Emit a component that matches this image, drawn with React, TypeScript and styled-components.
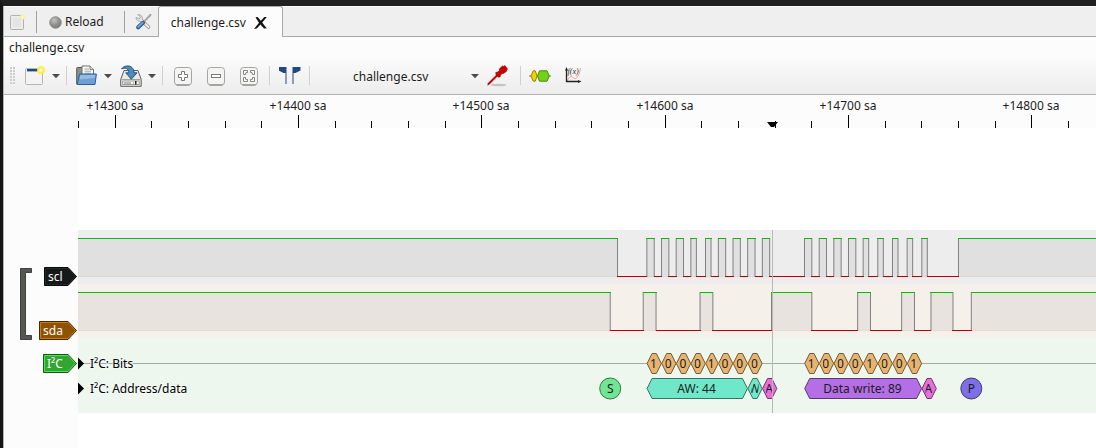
import React, { useSyncExternalStore } from "react";
import styled, { createGlobalStyle, css } from "styled-components";

const FONT = '"Noto Sans", "Open Sans", sans-serif';

const GlobalStyle = createGlobalStyle`
  *, *::before, *::after { box-sizing: border-box; }
  body {
    margin: 0;
    background: #fff;
    color: #1c1c1c;
    font: 12px/16px ${FONT};
  }
`;

/* ---------- window chrome ---------- */

const Window = styled.div`
  display: flex;
  flex-direction: column;
  min-height: 100vh;
  border-top: 6px solid #202020;
  border-left: 3px solid #151515;
  overflow: hidden;
`;

const Inner = styled.div`
  display: flex;
  flex-direction: column;
  flex: 1;
  border-left: 1px solid #b4b4b4;
`;

const resetButton = css`
  display: inline-flex;
  align-items: center;
  justify-content: center;
  padding: 0;
  border: 0;
  background: none;
  color: inherit;
  font: inherit;
`;

const TabBar = styled.header`
  display: flex;
  align-items: center;
  height: 31px;
  background: #efefef;
  box-shadow: inset 0 1px #fafafa, inset 0 -1px #a9a9a9;
`;

const BarButton = styled.button<{ $pad: number }>`
  ${resetButton}
  gap: 3px;
  height: 31px;
  padding: 1px ${(p) => p.$pad}px 0;
`;

const BarDivider = styled.span`
  width: 1px;
  height: 22px;
  background: #a2a2a2;
`;

const Tab = styled.div`
  display: flex;
  align-items: center;
  gap: 8px;
  height: 31px;
  padding: 1px 15px 0 12px;
  border: 1px solid #a9a9a9;
  border-bottom: 0;
  border-radius: 3px 3px 0 0;
  background: #fcfcfc;
`;

const CloseButton = styled.button`
  ${resetButton}
`;

const Caption = styled.div`
  height: 20px;
  padding: 3px 5px 0;
  background: #fcfcfc;
`;

const Spacer = styled.span<{ $width: number }>`
  flex: none;
  width: ${(p) => p.$width}px;
`;

/* ---------- tool bar ---------- */

const Toolbar = styled.div`
  display: flex;
  align-items: center;
  height: 38px;
  padding-left: 6px;
  border-bottom: 1px solid #b2b2b2;
  background: linear-gradient(#fbfbfb, #ededed);
`;

const Grip = styled.span`
  width: 5px;
  height: 17px;
  background-image: radial-gradient(circle at 1px 1px, #cdcdcd 1px, transparent 1px);
  background-size: 3px 3px;
`;

const Group = styled.div<{ $gap?: number; $start?: number; $end?: number }>`
  display: flex;
  align-items: center;
  gap: ${(p) => p.$gap ?? 11}px;
  padding: 0 ${(p) => p.$end ?? 9}px 0 ${(p) => p.$start ?? 9}px;
`;

const Split = styled.div`
  display: flex;
  align-items: center;
  gap: 5px;
`;

const ToolButton = styled.button`
  ${resetButton}
  width: 22px;
  height: 26px;
`;

const DropButton = styled.button`
  ${resetButton}
  width: 10px;
  height: 26px;
`;

const Divider = styled.span`
  width: 1px;
  height: 19px;
  background: #cfcfcf;
`;

const DeviceField = styled.div`
  display: grid;
  align-items: center;
  width: 175px;
`;

const DeviceSelect = styled.select`
  grid-area: 1 / 1;
  appearance: none;
  width: 100%;
  height: 24px;
  padding: 2px 20px 0 43px;
  border: 0;
  background: none;
  color: inherit;
  font: inherit;
`;

const SelectArrow = styled.span`
  grid-area: 1 / 1;
  display: flex;
  justify-self: end;
  padding-right: 5px;
  pointer-events: none;
`;

/* ---------- trace view ---------- */

const View = styled.main`
  display: flex;
  flex: 1;
`;

const Margin = styled.aside`
  display: flex;
  flex-direction: column;
  align-items: flex-end;
  gap: 13px;
  flex: none;
  width: 74px;
  padding-top: 172px;
  background: #fcfcfc;
`;

const ChannelGroup = styled.div`
  display: flex;
  justify-content: space-between;
  align-self: stretch;
  padding-left: 16px;
`;

const ChannelTags = styled.div`
  display: flex;
  flex-direction: column;
  justify-content: space-between;
  align-items: flex-end;
  height: 74px;
`;

const Canvas = styled.div`
  display: flex;
  flex-direction: column;
  flex: 1;
  min-width: 0;
`;

const Ruler = styled.svg`
  display: block;
  width: 100%;
  height: 33px;
  background: #fcfcfc;
`;

const Traces = styled.svg`
  display: block;
  width: 100%;
  height: 183px;
  margin-top: 102px;
`;

const Label = styled.text`
  font: 12px ${FONT};
  fill: #1c1c1c;
`;

const HaloLabel = styled(Label)`
  fill: #000;
  stroke: #f6fbf7;
  stroke-width: 2px;
  stroke-opacity: 0.8;
  paint-order: stroke;
`;

const TagText = styled.text`
  font: 12px ${FONT};
  fill: #fff;
`;

/* ---------- time scale ---------- */

const FIRST = 14300;
const SCALE = 1.833;
const EXTENT = 4000;
const MARGIN_WIDTH = 78;
const px = (sample: number) => 37.3 + (sample - FIRST) * SCALE;

const subscribeResize = (notify: () => void) => {
  window.addEventListener("resize", notify);
  return () => window.removeEventListener("resize", notify);
};
const useCanvasWidth = () => useSyncExternalStore(subscribeResize, () => window.innerWidth - MARGIN_WIDTH);

/* ---------- data ---------- */

const SCL = [
  14574, 14590, 14594, 14598, 14602, 14606, 14610, 14614, 14617, 14622, 14625, 14629, 14633, 14637, 14641,
  14645, 14649, 14653, 14657, 14676, 14680, 14684, 14688, 14692, 14696, 14700, 14704, 14708, 14711, 14716,
  14719, 14724, 14727, 14732, 14735, 14740, 14743, 14760,
];
const SDA = [
  14570, 14588, 14595, 14619, 14626, 14658, 14680, 14705, 14712, 14729, 14736, 14745, 14757, 14767,
];

type Note = { from: number; to: number; text: string; fill: string; line: string };

const bitNotes = (edges: number[], bits: string): Note[] =>
  bits.split("").map((text, i) => ({ from: edges[i], to: edges[i + 1], text, fill: "#e7b36f", line: "#735937" }));

const BITS: Note[] = [
  ...bitNotes([14590, 14598, 14606, 14614, 14622, 14629, 14637, 14645, 14653], "10001000"),
  ...bitNotes([14676, 14684, 14692, 14700, 14708, 14716, 14724, 14732, 14740], "10001001"),
];

const BYTES: Note[] = [
  { from: 14590, to: 14645, text: "AW: 44", fill: "#6fe7c9", line: "#377364" },
  { from: 14645, to: 14653, text: "W", fill: "#6fe7c9", line: "#377364" },
  { from: 14653, to: 14661, text: "A", fill: "#e76fda", line: "#73376d" },
  { from: 14676, to: 14740, text: "Data write: 89", fill: "#b46fe7", line: "#593773" },
  { from: 14740, to: 14748, text: "A", fill: "#e76fda", line: "#73376d" },
];

/* ---------- trace drawing ---------- */

function Signal({ edges, top }: { edges: number[]; top: number }) {
  const high = top + 0.5;
  const low = top + 38.5;
  const points = [0, ...edges.map(px), EXTENT];
  const spans = points.slice(1).map((end, i) => ({ start: points[i], end, up: i % 2 === 0 }));
  return (
    <g>
      {spans.filter((s) => s.up).map((s) => (
        <g key={s.start}>
          <rect x={s.start} y={high} width={s.end - s.start} height={38} fill="#000" fillOpacity={0.05} />
          <path d={`M${s.start} ${low}H${s.end}`} stroke="#000" strokeOpacity={0.06} />
        </g>
      ))}
      {edges.map((e) => (
        <path key={e} d={`M${px(e)} ${top}V${low + 0.5}`} stroke="#808080" />
      ))}
      {spans.map((s) => (
        <path
          key={s.start}
          d={`M${s.start - 0.5} ${s.up ? high : low}H${s.end + 0.5}`}
          stroke={s.up ? "#00c000" : "#c00000"}
          shapeRendering="crispEdges"
        />
      ))}
    </g>
  );
}

function Annotation({ note, mid, id }: { note: Note; mid: number; id: string }) {
  const a = px(note.from) + 0.2;
  const b = px(note.to) - 0.2;
  const shape = `${a},${mid} ${a + 5},${mid - 10} ${b - 5},${mid - 10} ${b},${mid} ${b - 5},${mid + 10} ${a + 5},${mid + 10}`;
  return (
    <g>
      <clipPath id={id}>
        <rect x={a + 3.5} y={mid - 10} width={b - a - 7} height={20} />
      </clipPath>
      <polygon points={shape} fill={note.fill} stroke={note.line} />
      <Label x={(a + b) / 2 - 0.7} y={mid + 4.5} textAnchor="middle" clipPath={`url(#${id})`}>
        {note.text}
      </Label>
    </g>
  );
}

function Event({ at, text, fill, line }: { at: number; text: string; fill: string; line: string }) {
  return (
    <g>
      <circle cx={px(at)} cy={158.5} r={10.5} fill={fill} stroke={line} />
      <Label x={px(at)} y={163} textAnchor="middle">{text}</Label>
    </g>
  );
}

function TimeRuler() {
  const width = useCanvasWidth();
  const count = Math.ceil(width / (20 * SCALE));
  const ticks = Array.from({ length: count }, (_, i) => FIRST - 20 + i * 20);
  return (
    <Ruler role="img" aria-label="Sample ruler">
      {ticks.map((t) => {
        const x = Math.floor(px(t));
        const major = t % 100 === 0;
        return (
          <g key={t}>
            <rect x={x} y={major ? 20 : 26} width={1} height={major ? 13 : 7} fill="#000" />
            {major && x + 30 < width && <Label x={x} y={15} textAnchor="middle">{`+${t} sa`}</Label>}
          </g>
        );
      })}
      <path d="M689 27H700L696 32H693Z" fill="#000" />
    </Ruler>
  );
}

function TraceArea() {
  return (
    <Traces role="img" aria-label="scl, sda and I²C traces">
      <rect width="100%" height={54} fill="#ededed" />
      <rect y={54} width="100%" height={54} fill="#f5f0ea" />
      <rect y={108} width="100%" height={75} fill="#edf7ee" />
      <Signal edges={SCL} top={8} />
      <Signal edges={SDA} top={62} />
      <path d={`M0 133.5H${EXTENT}`} stroke="#a3aaa4" />
      <path d="M0 127.5L6 133.5L0 139.5ZM0 152.5L6 158.5L0 164.5Z" fill="#000" />
      <HaloLabel x={12} y={138}>I²C: Bits</HaloLabel>
      <HaloLabel x={12} y={163}>I²C: Address/data</HaloLabel>
      {BITS.map((n) => <Annotation key={n.from} note={n} mid={133.5} id={`bit${n.from}`} />)}
      {BYTES.map((n) => <Annotation key={n.from} note={n} mid={158.5} id={`byte${n.from}`} />)}
      <Event at={14570} text="S" fill="#6fe792" line="#377349" />
      <Event at={14767} text="P" fill="#7f6fe7" line="#3f3773" />
      <path d="M694.5 0V183" stroke="#b9b9b9" />
    </Traces>
  );
}

function Tag({ width, text, fill, light, dark }: { width: number; text: string; fill: string; light: string; dark: string }) {
  const shape = (i: number) =>
    `${i},${i} ${width - 9},${i} ${width - i},9.5 ${width - 9},${19 - i} ${i},${19 - i}`;
  return (
    <svg width={width + 1} height={20} role="img" aria-label={text}>
      <polygon points={shape(0.5)} fill={dark} stroke={dark} />
      <polygon points={shape(1.5)} fill={fill} stroke={light} />
      <TagText x={4} y={14}>{text}</TagText>
    </svg>
  );
}

/* ---------- icons ---------- */

const Arrow = () => (
  <svg width="10" height="6" viewBox="0 0 10 6"><path d="M1 1H9L5 5.2Z" fill="#4c4c4c" /></svg>
);

const NewSessionIcon = () => (
  <svg width="22" height="22" viewBox="0 0 22 22">
    <rect x="1.5" y="3.5" width="17" height="16" rx="1" fill="#f3f3f3" stroke="#b5b5b5" />
    <rect x="3" y="4" width="11" height="2.4" fill="#204a87" />
    <circle cx="17" cy="5" r="4" fill="#fcee3c" fillOpacity=".9" />
    <circle cx="17" cy="5" r="1.8" fill="#fffcc0" />
  </svg>
);

const NewTabIcon = () => (
  <svg width="16" height="16" viewBox="0 0 16 16">
    <rect x="0.5" y="1.5" width="13" height="14" rx="1" fill="#ececec" stroke="#b3b0aa" />
    <rect x="3" y="4" width="8" height="9" fill="#e4e4e4" />
    <circle cx="12.5" cy="3" r="2.6" fill="#f7efa0" />
    <circle cx="12.5" cy="3" r="1" fill="#fffce0" />
  </svg>
);

const BallIcon = () => (
  <svg width="13" height="13" viewBox="0 0 13 13">
    <defs>
      <radialGradient id="ball" cx=".38" cy=".3" r=".8">
        <stop offset="0" stopColor="#c3c4bf" />
        <stop offset=".5" stopColor="#92948f" />
        <stop offset="1" stopColor="#747672" />
      </radialGradient>
    </defs>
    <circle cx="6.5" cy="6.5" r="5.8" fill="url(#ball)" stroke="#838580" strokeWidth=".8" />
  </svg>
);

const ToolsIcon = () => (
  <svg width="17" height="16" viewBox="0 0 17 16" fill="none" strokeLinecap="round">
    <path d="M5.500 5.500L13.500 13" stroke="#8f918d" strokeWidth="3.600" />
    <path d="M3.200 .8L5.400 2.800L4.800 4.400L3 4.800L1.200 3.200C.8 6 2.800 7.600 5.200 6.800L7.400 4.800C7.600 2.200 5.600 .2 3.200 .8Z" fill="#e8e8e6" stroke="#999b97" strokeWidth=".8" />
    <path d="M5.500 5.500L13.500 13" stroke="#ecece9" strokeWidth="2" />
    <path d="M15.400 1L8.800 7.800" stroke="#8a8c88" strokeWidth="1.800" />
    <path d="M15.200 1.200L9.200 7.400" stroke="#dcdcda" strokeWidth=".7" />
    <path d="M8 8.800L3.200 13.300" stroke="#2b5b9a" strokeWidth="4" />
    <path d="M7.600 8.800L3.200 12.900" stroke="#729fcf" strokeWidth="2" />
  </svg>
);

const CloseIcon = () => (
  <svg width="13" height="12" viewBox="0 0 13 12" fill="#111">
    <path d="M1.500 .3L3.600 0L6.800 3.800L10.400 0H12.800L8.200 5.400L11.800 10.200L13 11.200L10 11.500L6.400 7.500L2.800 11.600L0 12L5 5.800L2.400 1.700Z" />
  </svg>
);

const OpenIcon = () => (
  <svg width="22" height="22" viewBox="0 0 22 22">
    <path d="M.7 19V3.2Q.7 2.5 1.4 2.5H6L7 4H16V19Z" fill="#8d8f8b" stroke="#565854" />
    <path d="M6 12V1H14L17.5 4.5V12Z" fill="#fafafa" stroke="#6d6f6b" />
    <path d="M8.5 4H13M8.5 6.2H15M8.5 8.2H15" stroke="#a2a4a0" />
    <path d="M14 1V4.5H17.5" fill="#ddd" stroke="#6d6f6b" strokeWidth=".8" />
    <path d="M3.5 9H20.4L19 19.5H1.2Z" fill="#6f9ed3" stroke="#2d61a3" strokeLinejoin="round" />
    <path d="M4.3 10H19.3L18.8 13L3.6 14.5Z" fill="#97bbe3" />
  </svg>
);

const SaveIcon = () => (
  <svg width="22" height="22" viewBox="0 0 22 22">
    <path d="M4 5.5H18L21.2 14.5V21.3H.7V14.5Z" fill="#e9e9e7" stroke="#5b5d59" strokeLinejoin="round" />
    <path d="M1.5 14.5H20.5" stroke="#a0a29e" />
    <rect x="2.7" y="16" width="16.5" height="3.6" fill="#f7f7f7" stroke="#8a8c88" strokeWidth=".8" />
    <path d="M4 18H11M13 18H14" stroke="#b7b9b5" strokeWidth="2" />
    <rect x="15" y="16" width="1.5" height="3.5" fill="#222" />
    <path d="M1.6 4C3 .4 13.8-1.8 14 7.8H17L11.3 14.2L5.8 7.8H8.7C9 3.6 5 2 1.6 4Z" fill="#4b8cc0" stroke="#1f5683" strokeLinejoin="round" />
  </svg>
);

const Key = ({ children }: { children: React.ReactNode }) => (
  <svg width="22" height="22" viewBox="0 0 22 22">
    <rect x="2.5" y="2.5" width="17" height="17.5" rx="3" fill="#f4f4f3" stroke="#a4a6a2" />
    <path d="M4.5 20H17.5" stroke="#7c7e7a" />
    {children}
  </svg>
);

const ZoomInIcon = () => (
  <Key><path d="M9.5 6.5H12.5V9.5H15.5V12.5H12.5V15.5H9.5V12.5H6.5V9.5H9.5Z" fill="#fff" stroke="#777974" /></Key>
);
const ZoomOutIcon = () => (
  <Key><rect x="6.5" y="9.5" width="9" height="3" fill="#fff" stroke="#777974" /></Key>
);
const ZoomFitIcon = () => (
  <Key>
    <path
      d="M5.5 5.5H9.5V7.5H8V8.5H7.5V9.5H5.5ZM12.5 5.5H16.5V9.5H14.5V8.5H14V7.5H12.5ZM5.5 12.5H7.5V14H8V14.5H9.5V16.5H5.5ZM16.5 12.5H14.5V14H14V14.5H12.5V16.5H16.5Z"
      fill="#fff"
      stroke="#777974"
      strokeWidth=".9"
    />
  </Key>
);

const CursorsIcon = () => (
  <svg width="22" height="22" viewBox="0 0 22 22" fill="#204a87">
    <path d="M-.5 2H7.500V19H6.500V8H4.500L-.5 5.500ZM21.500 2H13.500V19H14.500V8H16.500L21.500 5.500Z" />
  </svg>
);

const ProbeIcon = () => (
  <svg width="22" height="22" viewBox="0 0 22 22">
    <ellipse cx="11.500" cy="20" rx="8" ry="1.300" fill="#000" fillOpacity=".18" />
    <path d="M1 19.500L10.500 10" stroke="#c00" strokeWidth="2" />
    <path
      d="M9 9.500L8.800 7.500L11 7L12.500 5.500L12.300 4L15.500 1L16.800 1.500L17.800 .5L20.500 4L19.600 5L19.800 6L16.500 8.500L15.200 8.400L13.500 10L13 12L11 12Z"
      fill="#c00"
      stroke="#a40000"
      strokeWidth=".7"
    />
    <path d="M.3 20.500L2 18.500" stroke="#444" strokeWidth=".8" />
  </svg>
);

const DecoderIcon = () => (
  <svg width="22" height="22" viewBox="0 0 22 22">
    <path d="M0 11H22" stroke="#6b6d69" />
    <path d="M2 11L4.2 5.8H6.2L8.2 11L6.2 16.2H4.2Z" fill="#edd400" stroke="#9b8200" />
    <path d="M8.5 11L10.5 5.8H18L20.3 11L18 16.2H10.5Z" fill="#73d216" stroke="#4a8a0b" />
  </svg>
);

const MathIcon = () => (
  <svg width="22" height="22" viewBox="0 0 22 22">
    <path d="M5 16.500C7 12 9 9.500 11 12.500C13.500 16 17.500 11 18.500 3" fill="none" stroke="#f59a9a" />
    <path d="M4.500 5V16.500H17" fill="none" stroke="#222" strokeWidth="1.300" />
    <path d="M3 5.500L4.500 2L6 5.500ZM16 15L19.500 16.500L16 18Z" fill="#222" />
    <text x="5.500" y="8.500" fontFamily="Liberation Serif, serif" fontStyle="italic" fontSize="8" fill="#222">f(x)</text>
  </svg>
);

/* ---------- page ---------- */

export default function App() {
  return (
    <Window>
      <GlobalStyle />
      <Inner>
        <TabBar>
          <BarButton $pad={6} aria-label="New session"><NewTabIcon /></BarButton>
          <Spacer $width={4} />
          <BarDivider />
          <BarButton $pad={12}><BallIcon />Reload</BarButton>
          <Spacer $width={8} />
          <BarDivider />
          <Spacer $width={4} />
          <BarButton $pad={6} aria-label="Settings"><ToolsIcon /></BarButton>
          <Tab>
            <span>challenge.csv</span>
            <CloseButton aria-label="Close tab"><CloseIcon /></CloseButton>
          </Tab>
        </TabBar>
        <Caption>challenge.csv</Caption>
        <Toolbar>
          <Grip />
          <Group $end={5}>
            <Split>
              <ToolButton aria-label="New view"><NewSessionIcon /></ToolButton>
              <DropButton aria-label="New view options"><Arrow /></DropButton>
            </Split>
          </Group>
          <Divider />
          <Group $gap={7} $end={5}>
            <Split>
              <ToolButton aria-label="Open"><OpenIcon /></ToolButton>
              <DropButton aria-label="Open options"><Arrow /></DropButton>
            </Split>
            <Split>
              <ToolButton aria-label="Save"><SaveIcon /></ToolButton>
              <DropButton aria-label="Save options"><Arrow /></DropButton>
            </Split>
          </Group>
          <Divider />
          <Group>
            <ToolButton aria-label="Zoom in"><ZoomInIcon /></ToolButton>
            <ToolButton aria-label="Zoom out"><ZoomOutIcon /></ToolButton>
            <ToolButton aria-label="Zoom to fit"><ZoomFitIcon /></ToolButton>
          </Group>
          <Divider />
          <Group $end={8}>
            <ToolButton aria-label="Show cursors"><CursorsIcon /></ToolButton>
          </Group>
          <Divider />
          <DeviceField>
            <DeviceSelect aria-label="Device" defaultValue="challenge.csv">
              <option>challenge.csv</option>
            </DeviceSelect>
            <SelectArrow><Arrow /></SelectArrow>
          </DeviceField>
          <Spacer $width={2} />
          <ToolButton aria-label="Configure channels"><ProbeIcon /></ToolButton>
          <Spacer $width={11} />
          <Divider />
          <Group $start={8}>
            <ToolButton aria-label="Add protocol decoder"><DecoderIcon /></ToolButton>
            <ToolButton aria-label="Add math signal"><MathIcon /></ToolButton>
          </Group>
        </Toolbar>
        <View>
          <Margin>
            <ChannelGroup>
              <svg width="14" height="74" viewBox="0 0 14 74">
                <path d="M.5 1.500H11.500V5.500H5.500V68.500H11.500V72.500H.5Z" fill="#555753" stroke="#3f413e" />
              </svg>
              <ChannelTags>
                <Tag width={33} text="scl" fill="#16191a" light="#24292a" dark="#080a0a" />
                <Tag width={38} text="sda" fill="#8f5202" light="#cd7a10" dark="#472901" />
              </ChannelTags>
            </ChannelGroup>
            <Tag width={34} text="I²C" fill="#33a532" light="#4aea48" dark="#1a541a" />
          </Margin>
          <Canvas>
            <TimeRuler />
            <TraceArea />
          </Canvas>
        </View>
      </Inner>
    </Window>
  );
}
